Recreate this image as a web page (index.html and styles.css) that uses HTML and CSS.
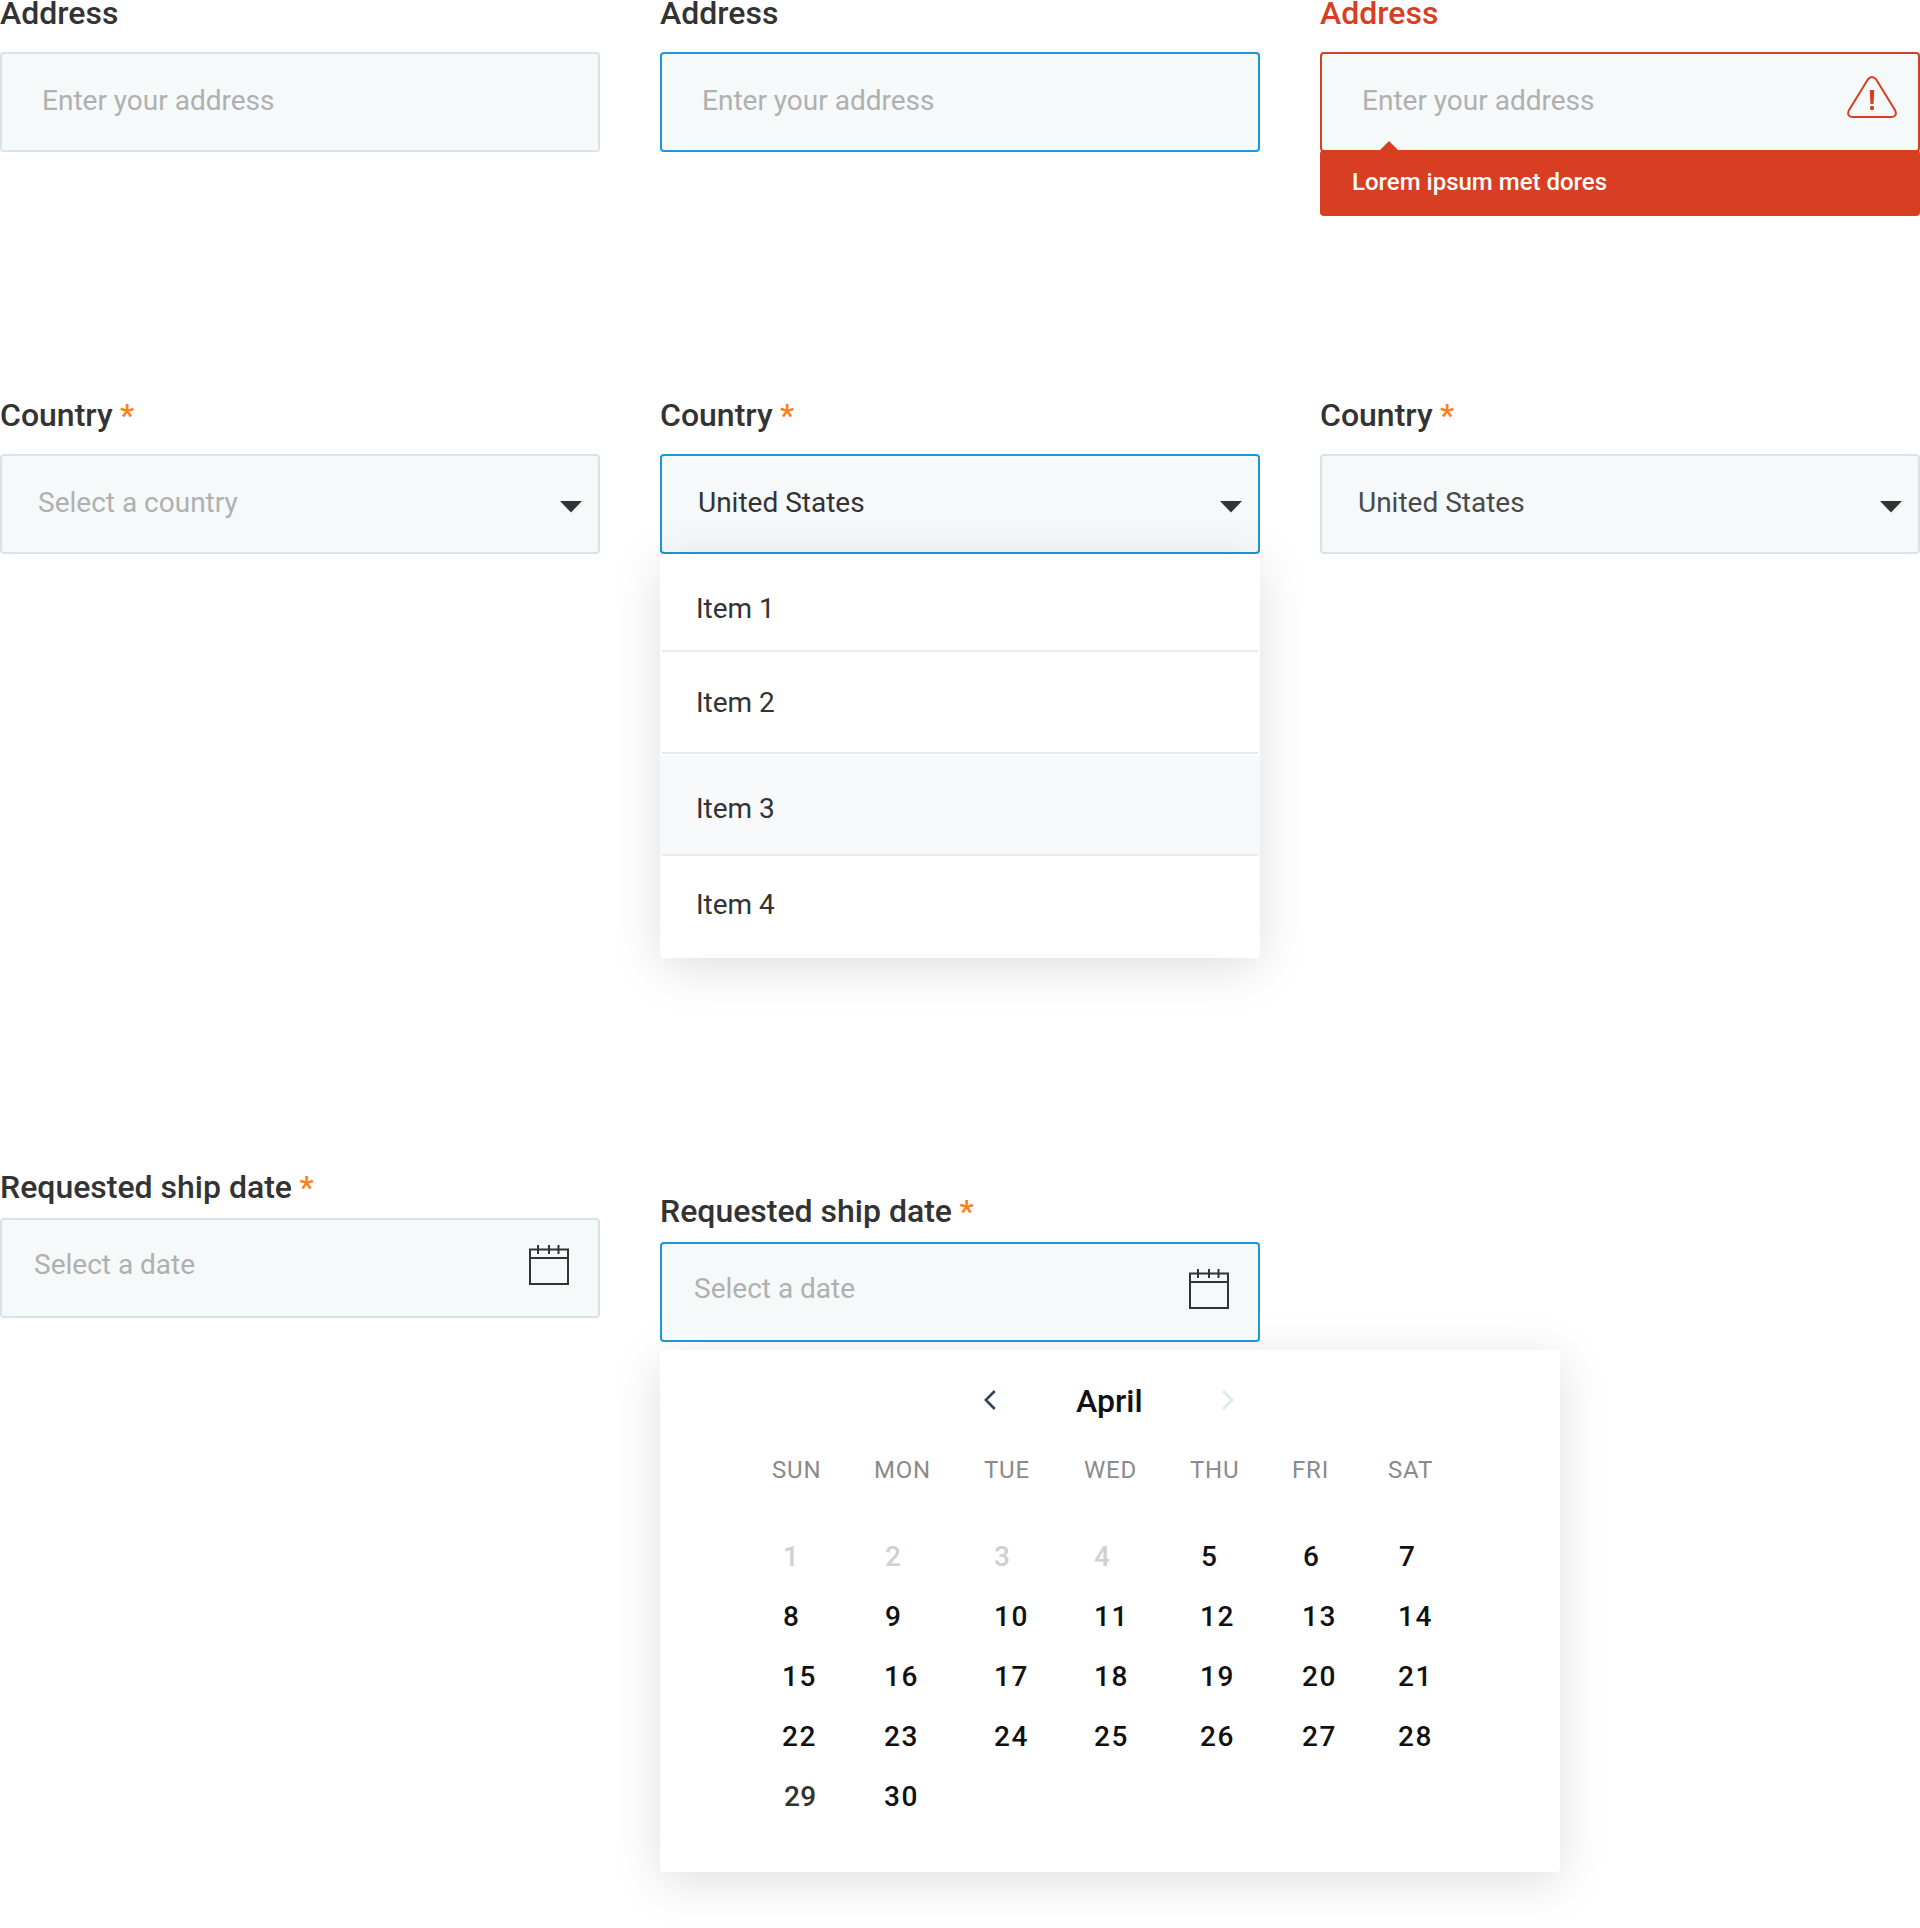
FILE: index.html
```html
<!DOCTYPE html>
<html lang="en">
<head>
<meta charset="utf-8">
<title>Form fields</title>
<link rel="stylesheet" href="styles.css">
</head>
<body>
<svg class="sprite" aria-hidden="true">
  <symbol id="calendar" viewBox="0 0 40 40">
    <path d="M1 4.500V39H39V4.500M1 13H39M9 0V9M20 0V9M29.500 0V9" fill="none" stroke="#333" stroke-width="2"/>
    <path d="M0 4.500H40" fill="none" stroke="#333" stroke-width="2"/>
  </symbol>
  <symbol id="caret" viewBox="0 0 22 12"><path d="M0 0H22L11 11.5Z" fill="#333"/></symbol>
</svg>
<main class="board">
  <section class="field">
    <div class="label">Address</div>
    <div class="control"><span class="text">Enter your address</span></div>
  </section>
  <section class="field">
    <div class="label">Address</div>
    <div class="control is-active"><span class="text">Enter your address</span></div>
  </section>
  <section class="field has-error">
    <div class="label">Address</div>
    <div class="control">
      <span class="text">Enter your address</span>
      <svg class="warning" viewBox="0 0 50 42"><path d="M20.800 3.500Q25 -1.300 29.200 3.500L48.200 34.500Q50.500 40.500 44.500 41H5.500Q-.5 40.500 1.800 34.500Z" fill="none" stroke="#d73e22" stroke-width="2"/><path d="M22.800 14H27.200L26.600 28H23.400Z" fill="#d73e22"/><circle cx="25" cy="32" r="2.200" fill="#d73e22"/></svg>
    </div>
    <div class="message">Lorem ipsum met dores</div>
  </section>

  <section class="field">
    <div class="label">Country <span class="required">*</span></div>
    <div class="control select"><span class="text">Select a country</span><svg class="caret"><use href="#caret"/></svg></div>
  </section>
  <section class="field">
    <div class="label">Country <span class="required">*</span></div>
    <div class="control select is-active is-open"><span class="text">United States</span><svg class="caret"><use href="#caret"/></svg></div>
    <div class="menu">
      <div class="item first">Item 1</div>
      <div class="item second">Item 2</div>
      <div class="item hovered">Item 3</div>
      <div class="item last">Item 4</div>
    </div>
  </section>
  <section class="field">
    <div class="label">Country <span class="required">*</span></div>
    <div class="control select is-filled"><span class="text">United States</span><svg class="caret"><use href="#caret"/></svg></div>
  </section>

  <section class="field date">
    <div class="label">Requested ship date <span class="required">*</span></div>
    <div class="control"><span class="text">Select a date</span><svg class="calendar-icon"><use href="#calendar"/></svg></div>
  </section>
  <section class="field date lowered">
    <div class="label">Requested ship date <span class="required">*</span></div>
    <div class="control is-active"><span class="text">Select a date</span><svg class="calendar-icon"><use href="#calendar"/></svg></div>
    <div class="picker">
      <div class="month">
        <svg class="arrow" viewBox="0 0 12 20"><path d="M10.800 1L1.800 10L10.800 19" fill="none" stroke="#2e4257" stroke-width="2.500"/></svg>
        <span class="month-name">April</span>
        <svg class="arrow" viewBox="0 0 12 20"><path d="M1.200 1L10.200 10L1.200 19" fill="none" stroke="#dbe7ec" stroke-width="2.500"/></svg>
      </div>
      <div class="week weekdays"><span>SUN</span><span>MON</span><span>TUE</span><span>WED</span><span>THU</span><span>FRI</span><span>SAT</span></div>
      <div class="week days">
        <span class="past single">1</span><span class="past single">2</span><span class="past">3</span><span class="past">4</span><span class="single">5</span><span class="single">6</span><span class="single">7</span>
        <span class="single">8</span><span class="single">9</span><span>10</span><span>11</span><span>12</span><span>13</span><span>14</span>
        <span>15</span><span>16</span><span>17</span><span>18</span><span>19</span><span>20</span><span>21</span>
        <span>22</span><span>23</span><span>24</span><span>25</span><span>26</span><span>27</span><span>28</span>
        <span class="soft">29</span><span>30</span>
      </div>
    </div>
  </section>
</main>
</body>
</html>
```
FILE: styles.css
```css
* { box-sizing: border-box; }
body {
  margin: 0;
  background: #fff;
  color: #333;
  font-family: Roboto, sans-serif;
  font-size: 28px;
  line-height: 33px;
}
.sprite { display: none; }
.board {
  display: grid;
  grid-template-columns: repeat(3, 600px);
  grid-template-rows: 402px 772px auto;
  column-gap: 60px;
  width: 1920px;
  height: 1928px;
  overflow: hidden;
}
.field { position: relative; }
.label {
  height: 26px;
  margin-bottom: 26px;
  font-size: 32px;
  font-weight: 500;
  line-height: 26px;
}
.required { margin-left: -.5px; color: #ff7f17; }
.control {
  display: flex;
  justify-content: space-between;
  align-items: flex-start;
  height: 100px;
  padding: 30px 21px 0 40px;
  border: 2px solid #d9e4ea;
  border-radius: 4px;
  background: #f5f9fa;
  color: #b0b0b0;
}
.is-active { border-color: #1c96dc; }
.select { padding: 30px 16px 0 36px; }
.is-open { color: #333; }
.is-filled { color: #4a4a4a; }
.caret { width: 22px; height: 12px; margin-top: 15px; }

.has-error .label { color: #d73e22; }
.has-error .control { border-color: #d73e22; }
.warning { width: 50px; height: 42px; margin-top: -8px; }
.message {
  position: relative;
  height: 66px;
  margin-top: -2px;
  padding: 18px 32px;
  border-radius: 4px;
  background: #d73e22;
  color: #fff;
  font-size: 24px;
  font-weight: 500;
  line-height: 28px;
}
.message::before {
  content: "";
  position: absolute;
  top: -9px;
  left: 60px;
  border: solid transparent;
  border-width: 0 9px 9px;
  border-bottom-color: #d73e22;
}

.menu, .picker {
  position: absolute;
  left: 0;
  border-radius: 4px;
  background: #fff;
  box-shadow: 0 10px 50px rgba(0, 0, 0, .13);
}
.menu { top: 152px; width: 600px; height: 404px; }
.item {
  padding-left: 36px;
  background: linear-gradient(#e9ebec, #e9ebec) center bottom / 596px 2px no-repeat;
}
.first { height: 98px; padding-top: 38px; }
.second { height: 102px; padding-top: 34px; }
.hovered { height: 100px; margin-top: 2px; padding-top: 36px; background-color: #f8f9fb; }
.last { padding-top: 32px; background: none; }

.date .label { margin-bottom: 18px; }
.date .control {
  position: relative;
  z-index: 1;
  padding: 28px 29px 0 32px;
}
.calendar-icon { width: 40px; height: 40px; margin-top: -3px; }
.lowered { top: 24px; }
.picker { top: 152px; width: 900px; height: 522px; padding-left: 122px; }
.month {
  display: flex;
  align-items: center;
  gap: 80px;
  margin: 32px 0 0 202px;
  color: #111;
  font-size: 32px;
  font-weight: 500;
  line-height: 38px;
}
.month-name { margin-right: -1px; }
.arrow { width: 12px; height: 20px; margin-bottom: 2px; }
.week { display: grid; grid-template-columns: 102px 110px 100px 106px 102px 96px 60px; }
.weekdays {
  margin: 36px 0 0 -10px;
  color: #8b8b8b;
  font-size: 24px;
  line-height: 28px;
  letter-spacing: .8px;
}
.days {
  grid-auto-rows: 60px;
  margin-top: 56px;
  color: #111;
  font-weight: 500;
  letter-spacing: 1.5px;
}
.single { padding-left: 1px; }
.past { color: #d0d0d0; }
.soft { padding-left: 2px; color: #333; letter-spacing: .3px; }
```
